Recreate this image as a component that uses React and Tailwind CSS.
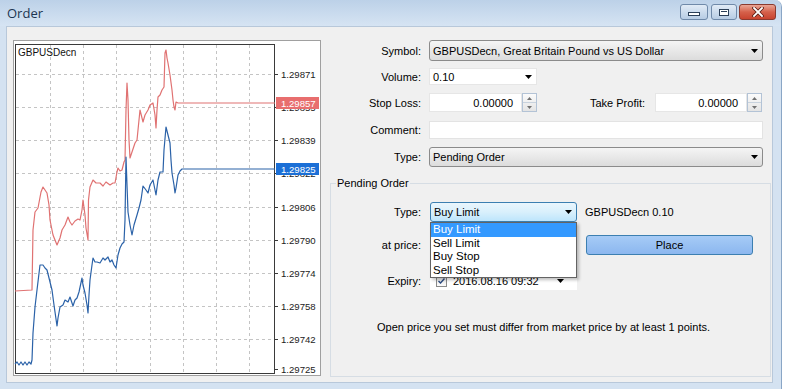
import React from "react";

const RED = [[15,291],[32,290],[33,230],[35,212],[38,208],[41,192],[43,187],[45,190],[47,193],[49,205],[50,220],[53,235],[57,245],[60,238],[62,230],[65,225],[68,217],[70,222],[72,225],[75,221],[78,219],[80,220],[82,210],[83,200],[85,215],[86,228],[88,240],[88.5,200],[90,187],[93,180],[96,183],[100,183],[103,186],[106,182],[110,185],[113,183],[115,183],[117,172],[118,168],[120,171],[122,170],[124,162],[125,160],[126,110],[127,83],[128,100],[129,140],[130,158],[132,152],[135,143],[137,140],[140,110],[142,118],[143,122],[145,115],[148,110],[150,105],[153,103],[155,115],[156,128],[157,110],[158,97],[160,95],[162,90],[164,87],[165,53],[166,50],[167,58],[168,63],[170,75],[172,90],[173,100],[174,107],[175,110],[176,102],[178,103],[275,103]];

const BLUE = [[15,364],[17,362],[19,365],[21,362],[23,365],[25,362],[27,365],[29,362],[31,364],[32,360],[33,333],[35,307],[37,290],[40,265],[43,265],[45,268],[47,270],[49,278],[52,290],[54,305],[57,326],[58,318],[60,307],[63,305],[65,300],[68,302],[70,297],[72,303],[73,306],[75,300],[77,298],[79,292],[82,278],[83,285],[85,293],[87,305],[88,313],[89,295],[90,280],[92,265],[93,258],[95,262],[97,262],[100,263],[103,258],[105,260],[108,257],[110,262],[112,260],[114,265],[116,268],[118,255],[120,248],[122,244],[124,242],[125,220],[126,157],[127,185],[128,212],[130,225],[132,235],[134,225],[137,215],[139,208],[141,200],[143,186],[146,190],[148,193],[150,185],[153,180],[155,190],[156,195],[158,180],[160,172],[163,172],[164,150],[166,127],[168,135],[170,143],[171,160],[172,173],[174,185],[175,193],[176,188],[178,175],[180,171],[182,169],[275,169]];

const pts = (a) => a.map((p) => p.join(",")).join(" ");

function Arrow({ className = "" }) {
  return (
    <svg width="7" height="4" viewBox="0 0 7 4" className={className}>
      <path d="M0 0h7L3.5 4z" fill="#000" />
    </svg>
  );
}

function Spinner() {
  return (
    <div className="flex h-full w-[15px] flex-col border border-[#b3c3d6] bg-gradient-to-b from-[#fbfbfb] to-[#e4e4e4]">
      <div className="flex flex-1 items-center justify-center border-b border-[#c8d2dd]">
        <svg width="5" height="3" viewBox="0 0 5 3"><path d="M0 3h5L2.5 0z" fill="#707070" /></svg>
      </div>
      <div className="flex flex-1 items-center justify-center">
        <svg width="5" height="3" viewBox="0 0 5 3"><path d="M0 0h5L2.5 3z" fill="#707070" /></svg>
      </div>
    </div>
  );
}

function Chart() {
  const hy = [74, 107, 140, 173, 207, 240, 273, 306, 339];
  const vx = [50, 83, 116, 150, 183, 216, 249];
  const labels = [
    [74, "1.29871"], [107, "1.29855"], [140, "1.29839"], [173, "1.29822"], [207, "1.29806"],
    [240, "1.29790"], [273, "1.29774"], [306, "1.29758"], [339, "1.29742"], [369, "1.29725"],
  ];
  return (
    <div className="h-[336px] w-[308px] shrink-0 border border-[#a0a0a0] bg-white">
      <svg width="306" height="334" viewBox="14 41 306 334" fontFamily="Liberation Sans, Arial, sans-serif" fontSize="9.6">
        {hy.map((y) => (
          <line key={"h" + y} x1="16" x2="274" y1={y + 0.5} y2={y + 0.5} stroke="#c4c4c4" strokeDasharray="3 3" />
        ))}
        {vx.map((x) => (
          <line key={"v" + x} x1={x + 0.5} x2={x + 0.5} y1="45" y2="373" stroke="#c4c4c4" strokeDasharray="3 3" />
        ))}
        <rect x="15.5" y="44.5" width="259" height="329" fill="none" stroke="#3a3a3a" />
        {labels.map(([y, t]) => (
          <g key={t}>
            <line x1="274" x2="278" y1={y + 0.5} y2={y + 0.5} stroke="#3a3a3a" />
            <text x="281" y={y + 4} fill="#222">{t}</text>
          </g>
        ))}
        <polyline points={pts(RED)} fill="none" stroke="#e07272" strokeWidth="1.2" strokeLinejoin="round" />
        <polyline points={pts(BLUE)} fill="none" stroke="#2b62a8" strokeWidth="1.2" strokeLinejoin="round" />
        <rect x="276" y="97" width="43" height="12" fill="#e86e6e" />
        <text x="281" y="107" fill="#fff">1.29857</text>
        <rect x="276" y="163" width="43" height="12" fill="#1b6fd6" />
        <text x="281" y="173" fill="#fff">1.29825</text>
        <text x="18" y="56" fill="#111" fontSize="10">GBPUSDecn</text>
      </svg>
    </div>
  );
}

export default function App() {
  return (
    <div className="relative h-[389px] w-[785px] overflow-hidden bg-white font-['Liberation_Sans',Arial,sans-serif] text-[11px] leading-[14px] text-black">
      <div className="flex h-[389px] w-[782px] flex-col rounded-tr-[7px] border-r border-[#8aa6c6] bg-[#d4e2f1]">
        {/* Title bar */}
        <div className="flex h-[26px] shrink-0 items-center rounded-tr-[7px] bg-gradient-to-b from-[#bcd1e8] to-[#d6e4f3] pl-[7px] pr-[5px]">
          <span className="font-['Open_Sans',sans-serif] text-[13px] text-[#1c3551]">Order</span>
          <div className="mt-[4px] ml-auto flex self-start">
            <div className="flex h-[16px] w-[28px] items-end justify-center rounded-[3px] border border-[#6f89a9] bg-gradient-to-b from-[#e1ebf6] to-[#b7cce4] pb-[3px]">
              <div className="h-[4px] w-[12px] border border-[#2b3f58] bg-white" />
            </div>
            <div className="ml-[3px] flex h-[16px] w-[26px] items-center justify-center rounded-[3px] border border-[#6f89a9] bg-gradient-to-b from-[#e1ebf6] to-[#b7cce4]">
              <div className="h-[7px] w-[10px] border border-[#2b3f58] bg-white p-[1px]">
                <div className="h-full w-full border-t border-[#2b3f58] bg-white" />
              </div>
            </div>
            <div className="ml-[2px] flex h-[16px] w-[37px] items-center justify-center rounded-[3px] border border-[#8a3a2f] bg-gradient-to-b from-[#e9a596] via-[#d5614b] to-[#c8432f]">
              <svg width="12" height="10" viewBox="0 0 12 10">
                <path d="M2 1l8 8M10 1l-8 8" stroke="#5a1e16" strokeWidth="3.4" strokeLinecap="square" />
                <path d="M2 1l8 8M10 1l-8 8" stroke="#fff" strokeWidth="1.8" strokeLinecap="square" />
              </svg>
            </div>
          </div>
        </div>

        {/* Body */}
        <div className="mb-[6px] ml-[6px] mr-[8px] flex flex-1 border border-[#b8c8da] bg-[#f0f0f0] pl-[6px] pt-[13px]">
          <Chart />

          <div className="ml-[9px] flex w-[441px] flex-col">
            {/* Symbol */}
            <div className="flex h-[21px] items-center">
              <span className="w-[91px] text-right">Symbol:</span>
              <div className="ml-[8px] flex h-full w-[334px] items-center rounded-[3px] border border-[#8b8b8b] bg-gradient-to-b from-[#f5f5f5] to-[#dcdcdc] pl-[3px] pr-[4px]">
                <span>GBPUSDecn, Great Britain Pound vs US Dollar</span>
                <Arrow className="ml-auto" />
              </div>
            </div>

            {/* Volume */}
            <div className="mt-[7px] flex h-[17px] items-center">
              <span className="w-[91px] text-right">Volume:</span>
              <div className="ml-[8px] flex h-full w-[108px] items-center border border-[#e6e6e6] bg-white pl-[3px] pr-[4px]">
                <span>0.10</span>
                <Arrow className="ml-auto" />
              </div>
            </div>

            {/* Stop Loss / Take Profit */}
            <div className="mt-[8px] flex h-[19px] items-center">
              <span className="w-[91px] text-right">Stop Loss:</span>
              <div className="ml-[8px] flex h-full w-[93px] items-center justify-end border border-[#e6e6e6] bg-white pr-[8px]">0.00000</div>
              <Spinner />
              <span className="w-[108px] text-right">Take Profit:</span>
              <div className="ml-[10px] flex h-full w-[92px] items-center justify-end border border-[#e6e6e6] bg-white pr-[8px]">0.00000</div>
              <Spinner />
            </div>

            {/* Comment */}
            <div className="mt-[9px] flex h-[18px] items-center">
              <span className="w-[91px] text-right">Comment:</span>
              <div className="ml-[8px] h-full w-[334px] border border-[#e3e3e3] bg-white" />
            </div>

            {/* Type */}
            <div className="mt-[8px] flex h-[20px] items-center">
              <span className="w-[91px] text-right">Type:</span>
              <div className="ml-[8px] flex h-full w-[334px] items-center rounded-[3px] border border-[#8b8b8b] bg-gradient-to-b from-[#f5f5f5] to-[#dcdcdc] pl-[3px] pr-[4px]">
                <span>Pending Order</span>
                <Arrow className="ml-auto" />
              </div>
            </div>

            {/* Pending Order group */}
            <div className="relative mb-[5px] mt-[16px] flex flex-1 flex-col border border-[#d6dde4] pt-[18px]">
              <span className="absolute -top-[8px] left-[5px] bg-[#f0f0f0] px-[1px]">Pending Order</span>

              <div className="flex h-[20px] items-center">
                <span className="w-[90px] text-right">Type:</span>
                <div className="relative ml-[9px] h-full w-[147px]">
                  <div className="flex h-full w-full items-center rounded-[3px] border border-[#3c7fb1] bg-gradient-to-b from-[#eaf6fd] via-[#d9f0fc] to-[#bde5fc] pl-[3px] pr-[4px]">
                    <span>Buy Limit</span>
                    <Arrow className="ml-auto" />
                  </div>
                  <div className="absolute left-0 top-[20px] z-10 w-[147px] border border-[#646464] bg-white text-[11.5px] leading-[13.5px] shadow-[2px_2px_3px_rgba(0,0,0,0.25)]">
                    <div className="bg-[#3399ff] pl-[2px] text-white">Buy Limit</div>
                    <div className="pl-[2px]">Sell Limit</div>
                    <div className="pl-[2px]">Buy Stop</div>
                    <div className="pl-[2px]">Sell Stop</div>
                  </div>
                </div>
                <span className="ml-[8px]">GBPUSDecn 0.10</span>
              </div>

              <div className="mt-[13px] flex h-[20px] items-center">
                <span className="w-[90px] text-right">at price:</span>
                <div className="ml-[9px] h-[18px] w-[147px] bg-white" />
                <div className="ml-[9px] flex h-full w-[167px] items-center justify-center rounded-[3px] border border-[#3c7fb1] bg-gradient-to-b from-[#a6cbf6] to-[#8cb7ef]">
                  Place
                </div>
              </div>

              <div className="mt-[17px] flex h-[18px] items-center">
                <span className="w-[90px] text-right">Expiry:</span>
                <div className="ml-[9px] flex h-full w-[147px] items-center bg-white pl-[6px] pr-[13px]">
                  <div className="flex h-[11px] w-[11px] items-center justify-center border border-[#8a8a8a] bg-gradient-to-b from-[#e8e8e8] to-[#fafafa]">
                    <svg width="7" height="6" viewBox="0 0 7 6"><path d="M0.5 3l2 2L6.5 0.5" fill="none" stroke="#2a4a80" strokeWidth="1.4" /></svg>
                  </div>
                  <span className="ml-[6px]">2016.08.16 09:32</span>
                  <Arrow className="ml-auto" />
                </div>
              </div>

              <div className="mt-[30px] pl-[46px]">Open price you set must differ from market price by at least 1 points.</div>
            </div>
          </div>
        </div>
      </div>
    </div>
  );
}
